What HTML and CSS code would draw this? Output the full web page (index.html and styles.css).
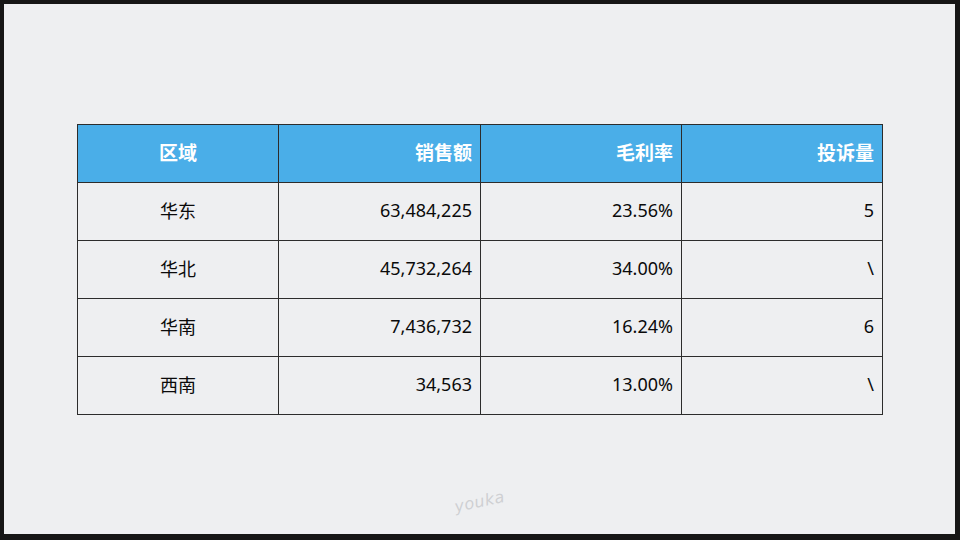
FILE: index.html
```html
<!DOCTYPE html>
<html lang="zh-CN">
<head>
<meta charset="utf-8">
<link rel="stylesheet" href="styles.css">
</head>
<body>
<div class="screen">
  <table class="data">
    <colgroup>
      <col class="c1"><col class="c2"><col class="c3"><col class="c4">
    </colgroup>
    <thead>
      <tr><th class="center">区域</th><th>销售额</th><th>毛利率</th><th>投诉量</th></tr>
    </thead>
    <tbody>
      <tr><td class="center">华东</td><td>63,484,225</td><td>23.56%</td><td>5</td></tr>
      <tr><td class="center">华北</td><td>45,732,264</td><td>34.00%</td><td>\</td></tr>
      <tr><td class="center">华南</td><td>7,436,732</td><td>16.24%</td><td>6</td></tr>
      <tr><td class="center">西南</td><td>34,563</td><td>13.00%</td><td>\</td></tr>
    </tbody>
  </table>
  <div class="mark">youka</div>
</div>
</body>
</html>
```
FILE: styles.css
```css
html, body {
  margin: 0;
  padding: 0;
  background: #161616;
}
body {
  width: 960px;
  height: 540px;
  overflow: hidden;
}
.screen {
  position: relative;
  margin: 4px 0 0 4px;
  width: 951px;
  height: 530px;
  background: #eeeff1;
  padding: 120px 0 0 73px;
  box-sizing: border-box;
}
.data {
  border-collapse: collapse;
  table-layout: fixed;
  width: 806px;
  font-family: "Noto Sans", "Noto Sans CJK SC", sans-serif;
  font-size: 18px;
  color: #0a0a0a;
}
.data .c1 { width: 201px; }
.data .c2 { width: 202px; }
.data .c3 { width: 201px; }
.data .c4 { width: 201px; }
.data th, .data td {
  border: 1px solid #2c2c2c;
  height: 58px;
  padding: 0 8px 4px;
  text-align: right;
  box-sizing: border-box;
}
.data th {
  background: #4aaee8;
  color: #fff;
  font-weight: 700;
  font-size: 19px;
  font-family: "Noto Sans CJK SC", sans-serif;
}
.data .center { text-align: center; }
.mark {
  position: absolute;
  left: 450px;
  top: 488px;
  font-family: "DejaVu Sans", sans-serif;
  font-size: 16px;
  font-style: italic;
  color: #cfd0d3;
  transform: rotate(-12deg);
  letter-spacing: 0.5px;
}
```
